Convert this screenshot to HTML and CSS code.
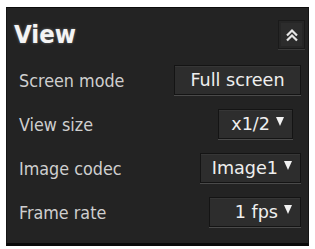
FILE: index.html
```
<!DOCTYPE html>
<html>
<head>
<meta charset="utf-8">
<link rel="stylesheet" href="styles.css">
</head>
<body>
<div class="panel">
  <div class="header">
    <div class="title">View</div>
    <div class="collapse">
      <svg width="14" height="14" viewBox="0 0 14 14"><polyline points="2,7.5 7,2.5 12,7.5" fill="none" stroke="#e6e6e6" stroke-width="2.2"/><polyline points="2,12.5 7,7.5 12,12.5" fill="none" stroke="#e6e6e6" stroke-width="2.2"/></svg>
    </div>
  </div>
  <div class="row">
    <span class="label">Screen mode</span>
    <span class="btn btn-full">Full screen</span>
  </div>
  <div class="row">
    <span class="label">View size</span>
    <span class="btn btn-size">x1/2<span class="tri"></span></span>
  </div>
  <div class="row">
    <span class="label">Image codec</span>
    <span class="btn btn-codec">Image1<span class="tri"></span></span>
  </div>
  <div class="row">
    <span class="label">Frame rate</span>
    <span class="btn btn-fps">1 fps<span class="tri"></span></span>
  </div>
</div>
</body>
</html>
```
FILE: styles.css
```
html, body { margin: 0; padding: 0; background: #fff; }
body { padding: 7px 6px 0 6px; }
.panel {
  width: 303px;
  height: 239px;
  box-sizing: border-box;
  background: #232323;
  border-top: 1px solid #0c0c0c;
  border-left: 1px solid #151515;
  border-right: 1px solid #151515;
  border-bottom: 3px solid #0a0a0a;
  padding: 0 0 0 11px;
  display: flex;
  flex-direction: column;
  font-family: "DejaVu Sans Condensed", "DejaVu Sans", sans-serif;
}
.header {
  height: 50px;
  display: flex;
  align-items: center;
  justify-content: space-between;
  padding-right: 3px;
}
.title {
  color: #f4f4f4;
  font-weight: bold;
  font-size: 25.5px;
  margin-left: -4px;
  margin-top: 2px;
  text-shadow: 0 0 3px rgba(255,255,255,0.35);
}
.collapse {
  width: 27px;
  height: 29px;
  box-sizing: border-box;
  border: 1px solid #1a1a1a;
  background: #2c2c2c;
  box-shadow: inset 0 0 0 2px #262626, 0 1px 0 #3a3a3a;
  display: flex;
  align-items: center;
  justify-content: center;
  margin-top: 3px;
}
.row {
  height: 44px;
  display: flex;
  align-items: center;
  justify-content: space-between;
  padding-right: 7px;
}
.label {
  color: #cfcfcf;
  font-size: 17.8px;
  margin-left: 1px;
}
.btn {
  height: 30px;
  box-sizing: border-box;
  border: 1px solid #141414;
  background: #2d2d2d;
  box-shadow: 0 1px 0 #4a4a4a, inset 0 1px 0 #363636;
  color: #efefef;
  font-family: "DejaVu Sans", sans-serif;
  font-size: 17.6px;
  display: flex;
  align-items: center;
  justify-content: center;
  padding: 0 10px;
}
.btn-full { width: 127px; }
.btn-size { width: 75px; margin-right: 8px; padding: 0 8px; justify-content: flex-end; }
.btn-codec { width: 101px; padding: 0 8px; justify-content: flex-end; }
.btn-fps { width: 92px; padding: 0 8px; justify-content: flex-end; }
.tri {
  display: inline-block;
  width: 0; height: 0;
  border-left: 4.5px solid transparent;
  border-right: 4.5px solid transparent;
  border-top: 9px solid #f2f2f2;
  margin-left: 6px;
  margin-top: -6px;
}
```
